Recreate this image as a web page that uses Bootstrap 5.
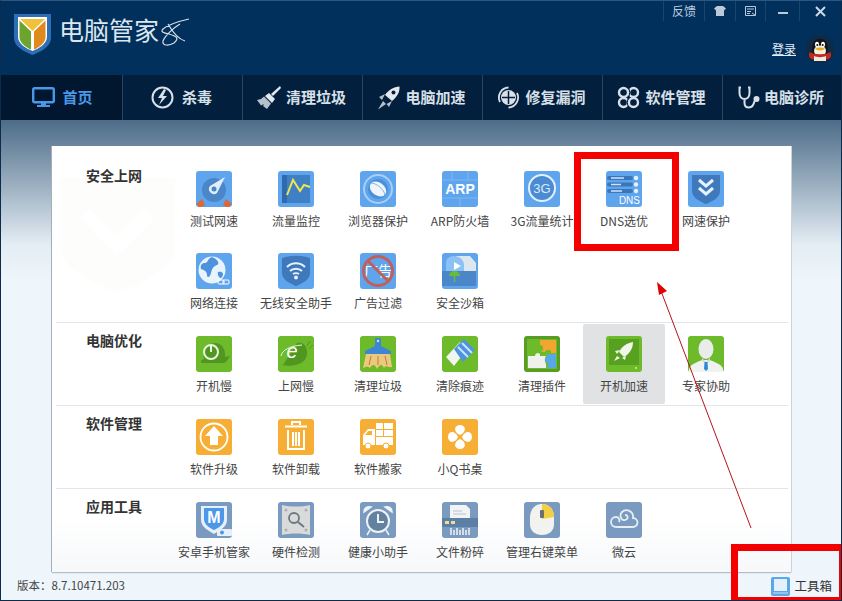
<!DOCTYPE html>
<html lang="zh-CN">
<head>
<meta charset="UTF-8">
<title>电脑管家</title>
<link rel="stylesheet" href="https://cdn.jsdelivr.net/npm/bootstrap@5.3.0/dist/css/bootstrap.min.css">
<style>
    body { margin: 0; background: #fff; font-family: "Noto Sans CJK SC", "Liberation Sans", sans-serif; }
    .win { width: 842px; height: 601px; position: relative; overflow: hidden; border: 1px solid #0b2c4c; border-top-color: #2c5680; }
    .win-head { height: 74px; background: #01305c; }
    .win-ctrl { height: 20px; color: #b9cadb; font-size: 12px; line-height: 20px; }
    .win-ctrl > div { border-left: 1px solid #17466f; height: 20px; }
    .logo-mark { margin: 13px 0 0 13px; }
    .app-title { color: #dbe6ef; font-size: 25px; line-height: 32px; margin: 12px 0 0 7px; }
    .app-swoosh { margin-top: 17px; }
    .login-box { gap: 10px; margin: 14px 7px 0 0; }
    .login-link { color: #e6eef5; font-size: 12px; }
    .tabs { height: 45px; background: #021f3e; }
    .tab-item { width: 120px; height: 45px; border-right: 1px solid #2a4560; color: #d8e0e8; font-size: 15px; font-weight: 700; gap: 5px; padding-right: 2px; }
    .tab-item:last-child { border-right: 0; flex: 1; gap: 3px; }
    .tab-home { width: 122px; background: #011730; color: #4a98e6; gap: 7px; padding-right: 0; padding-left: 2px; }
    .tab-wide { gap: 8px; }
    .main-area { height: 452px; padding: 26px 0 0 51px; background: linear-gradient(#4d6c88 0, #e4edf4 125px, #eef5fb 160px); }
    .tool-card { width: 739px; height: 426px; border: 0; border-radius: 0; position: relative; background: linear-gradient(#fff 370px, #f6f8fa 426px); box-shadow: -1px 0 0 #a4afb9, 0 1px 1px #b4bcc4, 1px 0 0 #d2d8de; }
    .tool-row { margin: 0 3px 0 4px; padding: 1px 0; border-bottom: 1px solid #e2e5e9; position: relative; }
    .tool-row:first-of-type { padding-top: 13px; }
    .tool-row:last-of-type { border-bottom: 0; }
    .row-title { width: 117px; padding: 7px 0 0 30px; font-size: 14px; line-height: 18px; font-weight: 700; color: #333; flex: none; }
    .tool-grid { display: grid; grid-template-columns: repeat(7, 82px); row-gap: 2px; }
    .tool-cell { height: 80px; padding-top: 12px; text-align: center; font-size: 12px; line-height: 18px; color: #444; border-radius: 2px; white-space: nowrap; }
    .tool-cell svg { display: block; margin: 0 auto 5px; }
    .tool-on { background: #e0e2e4; }
    .watermark { position: absolute; left: 8px; top: 32px; }
    .win-foot { height: 28px; background: #eef5fb; font-size: 11.5px; color: #444; padding: 0 9px 0 16px; }
    .foot-box { font-size: 12.5px; color: #333; gap: 4px; }
    .red-box { position: absolute; border: 7px solid #f40000; }
    .red-dns { left: 573px; top: 151px; width: 105px; height: 99px; }
    .red-tool { left: 730px; top: 543px; width: 115px; height: 60px; }
    .red-arrow { position: absolute; left: 640px; top: 270px; }
</style>
</head>
<body>
<div class="win d-flex flex-column">

    <!-- title bar -->
    <div class="win-head d-flex justify-content-between">
        <div class="d-flex align-items-start">
            <svg class="logo-mark" width="38" height="42" viewBox="0 0 38 42">
                <path d="M0 0H37V24C37 33 26 38 18.5 41C11 38 0 33 0 24Z" fill="#2d6fb6"/>
                <path d="M4 3H33V23C33 30 24 35 18.5 37C13 35 4 30 4 23Z" fill="#fff"/>
                <path d="M6 5H31L18.5 17Z" fill="#f0c23c"/>
                <path d="M5.500 6.500L17 17.500V35.500C12 33.500 5.500 29 5.500 23Z" fill="#6ba52e"/>
                <path d="M31.500 6.500L20 17.500V35.500C25 33.500 31.500 29 31.500 23Z" fill="#e08a1e"/>
            </svg>
            <div class="app-title">电脑管家</div>
            <svg class="app-swoosh" width="32" height="30" viewBox="0 0 32 30">
                <path d="M30 1C21 3 9 7 4 11C1 14 5 15 10 16C17 18 21 20 15 25C10 28 3 28 4 23C6 18 14 10 21 6M9 6C13 13 19 21 26 23" fill="none" stroke="#d7e1ea" stroke-width="1.200"/>
            </svg>
        </div>
        <div class="d-flex flex-column align-items-end">
            <div class="win-ctrl d-flex">
                <div class="text-center" style="width:41px">反馈</div>
                <div class="d-flex justify-content-center align-items-center" style="width:31px">
                    <svg width="12" height="10" viewBox="0 0 12 10"><path d="M3 0H9L12 2.500L10 4.500V10H2V4.500L0 2.500Z" fill="#b9cadb"/></svg>
                </div>
                <div class="d-flex justify-content-center align-items-center" style="width:30px">
                    <svg width="11" height="10" viewBox="0 0 11 10"><path d="M.5.5H10.500V9.500H.5ZM2 3H9M2 5.500H6M2 7.500H5M7 7L10 9" fill="none" stroke="#b9cadb"/></svg>
                </div>
                <div class="d-flex justify-content-center align-items-center" style="width:34px">
                    <svg width="10" height="8" viewBox="0 0 10 8"><rect y="5" width="10" height="2" fill="#b9cadb"/></svg>
                </div>
                <div class="d-flex justify-content-center align-items-center" style="width:42px">
                    <svg width="11" height="11" viewBox="0 0 11 11"><path d="M1 1L10 10M10 1L1 10" stroke="#ccd8e3" stroke-width="2"/></svg>
                </div>
            </div>
            <div class="login-box d-flex align-items-center">
                <a class="login-link" href="#">登录</a>
                <svg width="28" height="28" viewBox="0 0 28 28">
                    <circle cx="14" cy="14" r="14" fill="#0f2a45"/>
                    <ellipse cx="14" cy="13" rx="8" ry="9.500" fill="#14141a"/>
                    <ellipse cx="14" cy="16" rx="6" ry="5.500" fill="#f3f0e6"/>
                    <ellipse cx="11" cy="9.500" rx="2" ry="2.800" fill="#fff"/>
                    <ellipse cx="17" cy="9.500" rx="2" ry="2.800" fill="#fff"/>
                    <circle cx="11.300" cy="10" r="1" fill="#111"/>
                    <circle cx="16.700" cy="10" r="1" fill="#111"/>
                    <path d="M9 13.500C11 12 17 12 19 13.500C17 16 11 16 9 13.500Z" fill="#e9ad22"/>
                    <path d="M3.500 17C7 20 21 20 24.500 17C25.500 20 25 22 24 23C20 26 8 26 4 23C3 22 2.500 20 3.500 17Z" fill="#c9281e"/>
                    <path d="M8 21C11 22.500 17 22.500 20 21V26H8Z" fill="#efe9df"/>
                </svg>
            </div>
        </div>
    </div>

    <!-- main tabs -->
    <div class="tabs d-flex">
        <div class="tab-item tab-home d-flex align-items-center justify-content-center">
            <svg width="23" height="21" viewBox="0 0 23 21"><rect x="1.200" y="1.200" width="20.600" height="14" rx="1.500" fill="none" stroke="#4a98e6" stroke-width="2.400"/><path d="M9 16H14V18H18V20H5V18H9Z" fill="#4a98e6"/></svg>
            <span>首页</span>
        </div>
        <div class="tab-item tab-wide d-flex align-items-center justify-content-center">
            <svg width="23" height="23" viewBox="0 0 23 23"><circle cx="11.500" cy="11.500" r="10" fill="none" stroke="#d8e0e8" stroke-width="2"/><path d="M13 3L7 12H11L8 19L16 10H12L15 4Z" fill="#d8e0e8"/></svg>
            <span>杀毒</span>
        </div>
        <div class="tab-item d-flex align-items-center justify-content-center">
            <svg width="24" height="24" viewBox="0 0 24 24"><path d="M23 0L24 2L16 10L14 8Z" fill="#e4e9ee"/><path d="M12 7L18 13L15 17L8 10Z" fill="#e4e9ee"/><path d="M7 10.500L14 17.500L10 23L6 20L7 18L4 19.500L0 14L4 13Z" fill="#b6c0ca"/></svg>
            <span>清理垃圾</span>
        </div>
        <div class="tab-item d-flex align-items-center justify-content-center">
            <svg width="23" height="24" viewBox="0 0 23 24"><path d="M22.500 .5C23 6 20 11 15 15L8 9C11 4 17 1 22.500 .5Z" fill="#e4e9ee"/><path d="M8 8L2 11L5 14ZM15 15L12 21L9.500 18Z" fill="#b6c0ca"/><path d="M6 15L9 18L1 23.500Z" fill="#b6c0ca"/><circle cx="16.500" cy="6.500" r="2" fill="#021f3e"/></svg>
            <span>电脑加速</span>
        </div>
        <div class="tab-item d-flex align-items-center justify-content-center">
            <svg width="23" height="23" viewBox="0 0 23 23"><circle cx="11.500" cy="11.500" r="7.500" fill="#d8e0e8"/><path d="M11.500 5V18M5 11.500H18" stroke="#021f3e" stroke-width="1.500"/><path d="M3 16A10 10 0 0 1 11.500 1.500M20 7A10 10 0 0 1 11.500 21.500" fill="none" stroke="#d8e0e8" stroke-width="1.800"/></svg>
            <span>修复漏洞</span>
        </div>
        <div class="tab-item d-flex align-items-center justify-content-center">
            <svg width="23" height="23" viewBox="0 0 23 23"><circle cx="6.500" cy="6.500" r="4.500" fill="none" stroke="#d8e0e8" stroke-width="2.400"/><circle cx="16.500" cy="6.500" r="4.500" fill="none" stroke="#d8e0e8" stroke-width="2.400"/><circle cx="6.500" cy="16.500" r="4.500" fill="none" stroke="#d8e0e8" stroke-width="2.400"/><circle cx="16.500" cy="16.500" r="4.500" fill="none" stroke="#d8e0e8" stroke-width="2.400"/><path d="M11.500 1.500C13 5 13 8 11.500 11.500C10 15 10 18 11.500 21.500" fill="none" stroke="#021f3e" stroke-width="1"/></svg>
            <span>软件管理</span>
        </div>
        <div class="tab-item d-flex align-items-center justify-content-center">
            <svg width="23" height="23" viewBox="0 0 23 23"><path d="M3 1.500H1.500V7C1.500 11 4 13 6.500 13S11.500 11 11.500 7V1.500H10M6.500 13V17C6.500 20 8 21.500 11 21.500S15.500 20 16.500 15" fill="none" stroke="#d8e0e8" stroke-width="2"/><circle cx="18.500" cy="13" r="3" fill="#d8e0e8"/></svg>
            <span>电脑诊所</span>
        </div>
    </div>

    <!-- tools -->
    <div class="main-area">
        <div class="card tool-card">
            <svg class="watermark" width="115" height="115" viewBox="0 0 115 115"><path d="M0 0H115V68C115 90 80 105 57 115C34 105 0 90 0 68Z" fill="#fdfdfc"/><path d="M25 35L57 68L90 35" fill="none" stroke="#fff" stroke-width="14"/></svg>

            <div class="tool-row d-flex">
                <div class="row-title">安全上网</div>
                <div class="tool-grid">
                    <div class="tool-cell">
                        <svg width="36" height="36" viewBox="0 0 36 36"><rect width="36" height="36" rx="3" fill="#5ea5ee"/><circle cx="18" cy="19" r="12" fill="#4b86c6"/><path d="M0 33L6 28L9 34L6 36H3ZM36 33L30 28L27 34L30 36H33Z" fill="#d9683a"/><path d="M29 6L21 22A5 5 0 0 1 14 15Z" fill="#dfeefc"/><circle cx="18" cy="18" r="2.500" fill="#4b86c6"/></svg>
                        测试网速
                    </div>
                    <div class="tool-cell">
                        <svg width="36" height="36" viewBox="0 0 36 36"><rect width="36" height="36" rx="3" fill="#5ea5ee"/><rect x="4" y="4" width="28" height="28" fill="#3f7fc4"/><rect x="4" y="4" width="5" height="28" fill="#2f6aae"/><path d="M9 24L15 9L22 20L26 14L32 16" fill="none" stroke="#f3e64a" stroke-width="2"/></svg>
                        流量监控
                    </div>
                    <div class="tool-cell">
                        <svg width="36" height="36" viewBox="0 0 36 36"><rect width="36" height="36" rx="3" fill="#5ea5ee"/><circle cx="18" cy="18" r="14" fill="none" stroke="#a8cff5" stroke-width="2"/><circle cx="18" cy="18" r="10" fill="#4a8fd8"/><ellipse cx="18" cy="18" rx="9" ry="6.500" transform="rotate(35 18 18)" fill="#eef5fc"/><path d="M11 12C16 12 24 18 25 24" fill="none" stroke="#7db4ea"/></svg>
                        浏览器保护
                    </div>
                    <div class="tool-cell">
                        <svg width="36" height="36" viewBox="0 0 36 36"><rect width="36" height="36" rx="3" fill="#5ea5ee"/><path d="M0 9H36M0 27H36M10 0V9M26 0V9M18 27V36" stroke="#7db6f1"/><text x="18" y="23" text-anchor="middle" fill="#fff" font-family="Liberation Sans" font-size="14" font-weight="700">ARP</text></svg>
                        ARP防火墙
                    </div>
                    <div class="tool-cell">
                        <svg width="36" height="36" viewBox="0 0 36 36"><rect width="36" height="36" rx="3" fill="#5ea5ee"/><circle cx="18" cy="17" r="13" fill="#4a8bd4" stroke="#e3f0fc" stroke-width="2"/><text x="18" y="22" text-anchor="middle" fill="#dbeafa" font-family="Liberation Sans" font-size="13">3G</text></svg>
                        3G流量统计
                    </div>
                    <div class="tool-cell">
                        <svg width="36" height="36" viewBox="0 0 36 36"><rect width="36" height="36" rx="3" fill="#5ea5ee"/><path d="M3 7H25M3 13.500H25M3 20H25" stroke="#3b77b8" stroke-width="4" stroke-linecap="round"/><path d="M5 7H18M5 13.500H15M5 20H16" stroke="#cfe4fa" stroke-width="1.500"/><circle cx="30" cy="7" r="2.200" fill="#e6f1fc"/><circle cx="30" cy="13.500" r="2.200" fill="#e6f1fc"/><circle cx="30" cy="20" r="2.200" fill="#e6f1fc"/><text x="34" y="33" text-anchor="end" fill="#fff" font-family="Liberation Sans" font-size="10">DNS</text></svg>
                        DNS选优
                    </div>
                    <div class="tool-cell">
                        <svg width="36" height="36" viewBox="0 0 36 36"><rect width="36" height="36" rx="3" fill="#5ea5ee"/><path d="M4 4H32V20C32 27 23 31 18 33C13 31 4 27 4 20Z" fill="#3f78bb"/><path d="M11 9L18 15L25 9M11 17L18 23L25 17" fill="none" stroke="#e6f1fc" stroke-width="3"/></svg>
                        网速保护
                    </div>
                    <div class="tool-cell">
                        <svg width="36" height="36" viewBox="0 0 36 36"><rect width="36" height="36" rx="3" fill="#5ea5ee"/><circle cx="16" cy="17" r="13.500" fill="#e9f3fc"/><path d="M16 4C11 6 12 10 9 10S4 12 5 16C9 17 11 19 11 22S14 25 15 20S18 13 21 12S22 6 16 4ZM22 19C21 22 24 27 26 24S27 18 22 19Z" fill="#4d92dc"/><rect x="22" y="27" width="6" height="4" rx="1" fill="none" stroke="#fff"/><rect x="27" y="27" width="6" height="4" rx="1" fill="none" stroke="#fff"/></svg>
                        网络连接
                    </div>
                    <div class="tool-cell">
                        <svg width="36" height="36" viewBox="0 0 36 36"><rect width="36" height="36" rx="3" fill="#5ea5ee"/><path d="M4 5C13 2 23 2 32 5V20C32 27 23 31 18 33C13 31 4 27 4 20Z" fill="#3f78bb"/><path d="M9 14C14 9 22 9 27 14M12 18C15 15 21 15 24 18M15 21C16.500 20 19.500 20 21 21" fill="none" stroke="#e6f1fc" stroke-width="2"/><circle cx="18" cy="24.500" r="2" fill="#e6f1fc"/></svg>
                        无线安全助手
                    </div>
                    <div class="tool-cell">
                        <svg width="36" height="36" viewBox="0 0 36 36"><rect width="36" height="36" rx="3" fill="#5ea5ee"/><text x="18" y="23" text-anchor="middle" fill="#fff" font-size="14" font-family="Noto Sans CJK SC">广告</text><circle cx="18" cy="18" r="14.500" fill="none" stroke="#c0605a" stroke-width="3"/><path d="M8 8L28 28" stroke="#c0605a" stroke-width="3"/></svg>
                        广告过滤
                    </div>
                    <div class="tool-cell">
                        <svg width="36" height="36" viewBox="0 0 36 36"><rect width="36" height="36" rx="3" fill="#5ea5ee"/><path d="M14 3H28L34 10V22H14Z" fill="#dde7f0"/><path d="M4 10C4 5 8 3 12 3C16 3 22 6 22 12V22H4Z" fill="#8cc1f5"/><path d="M12 9L19 13L12 17Z" fill="#fff"/><rect x="0" y="18" width="34" height="15" fill="#4a86c8"/><path d="M7 23A5.500 5 0 0 1 18 23Z" fill="#6abb3a"/><path d="M12.500 23V29" stroke="#6abb3a" stroke-width="1.500"/></svg>
                        安全沙箱
                    </div>
                </div>
            </div>

            <div class="tool-row d-flex">
                <div class="row-title">电脑优化</div>
                <div class="tool-grid">
                    <div class="tool-cell">
                        <svg width="36" height="36" viewBox="0 0 36 36"><rect width="36" height="36" rx="3" fill="#6dbb2b"/><path d="M6 27C3 25 6 24 8 23C6 14 12 7 19 7S30 14 29 21L34 20L31 25C28 28 26 27 24 27H6Z" fill="#4f9720"/><circle cx="15" cy="16" r="7" fill="none" stroke="#e9f6dc" stroke-width="2"/><path d="M15 10V16" stroke="#e9f6dc" stroke-width="2"/></svg>
                        开机慢
                    </div>
                    <div class="tool-cell">
                        <svg width="36" height="36" viewBox="0 0 36 36"><rect width="36" height="36" rx="3" fill="#6dbb2b"/><path d="M5 29C10 31 27 30 29 19C30 12 26 5 19 7" fill="#4f9720"/><text x="14" y="22" text-anchor="middle" fill="#fff" font-family="Liberation Sans" font-size="20" font-style="italic">e</text><path d="M3 20C4 14 12 10 24 9" fill="none" stroke="#eaf6dd"/><path d="M29 10L32 5M31 13L35 9" stroke="#4f9720"/></svg>
                        上网慢
                    </div>
                    <div class="tool-cell">
                        <svg width="36" height="36" viewBox="0 0 36 36"><rect width="36" height="36" rx="3" fill="#6dbb2b"/><path d="M15 2H21V10L31 15V18H5V15L15 10Z" fill="#3d86d6"/><circle cx="18" cy="5" r="1.200" fill="#cfe4fa"/><path d="M6 18H30L32 31C28 32 26 28 24 32C22 28 20 28 17 33C15 28 12 28 10 32C8 30 6 31 3 32Z" fill="#edc77d"/><path d="M11 20L9 29M18 20V29M25 20L27 29" stroke="#b3813a"/></svg>
                        清理垃圾
                    </div>
                    <div class="tool-cell">
                        <svg width="36" height="36" viewBox="0 0 36 36"><rect width="36" height="36" rx="3" fill="#6dbb2b"/><path d="M4 21L18 6L25 13L12 30Z" fill="#f1f4ef"/><path d="M12 13L22 3L33 14L21 26Z" fill="#4d94e0"/><path d="M16 11L26 21M20 7L30 17" stroke="#cfe3f7" stroke-width="2"/></svg>
                        清除痕迹
                    </div>
                    <div class="tool-cell">
                        <svg width="36" height="36" viewBox="0 0 36 36"><rect width="36" height="36" rx="3" fill="#599c25"/><rect x="3" y="3" width="30" height="30" fill="#6dbb2b"/><path d="M16 4H32V17H27C28 13 22 13 21 16H17C20 14 20 9 16 9Z" fill="#f2a62e"/><path d="M4 20H11C11 16 17 16 16 20H22C20 23 21 26 22 28V32H4Z" fill="#eef1ec"/><path d="M22 18H32V32H23C25 30 25 26 21 26V22C24 23 24 19 22 18Z" fill="#58a8e8"/></svg>
                        清理插件
                    </div>
                    <div class="tool-cell tool-on">
                        <svg width="36" height="36" viewBox="0 0 36 36"><rect width="36" height="36" rx="3" fill="#6dbb2b"/><rect x="3" y="3" width="30" height="26" fill="#57a020"/><path d="M27 6C27 13 23 18 18 21L13 16C16 10 21 7 27 6Z" fill="#f1f6ec"/><path d="M14 14L9 15L11 18ZM20 20L19 24L16 22ZM11 20L14 22L8 25Z" fill="#f1f6ec"/><circle cx="30" cy="32" r="1" fill="#cbe8ab"/></svg>
                        开机加速
                    </div>
                    <div class="tool-cell">
                        <svg width="36" height="36" viewBox="0 0 36 36"><rect width="36" height="36" rx="3" fill="#6dbb2b"/><path d="M1 36V33C2 28 10 26 14 24H22C26 26 34 28 35 33V36Z" fill="#f0f2f2"/><ellipse cx="18" cy="13" rx="7.500" ry="10" fill="#e9ecec"/><path d="M14 22L18 26L22 22V25L18 28L14 25Z" fill="#d5d9da"/><path d="M16.500 26H19.500L20 33L18 35L16 33Z" fill="#2d8bd6"/></svg>
                        专家协助
                    </div>
                </div>
            </div>

            <div class="tool-row d-flex">
                <div class="row-title">软件管理</div>
                <div class="tool-grid">
                    <div class="tool-cell">
                        <svg width="36" height="36" viewBox="0 0 36 36"><rect width="36" height="36" rx="3" fill="#f6ae35"/><circle cx="18" cy="18" r="13.500" fill="none" stroke="#fff" stroke-width="1.800"/><path d="M18 7L27 17H22V26H14V17H9Z" fill="#fff"/></svg>
                        软件升级
                    </div>
                    <div class="tool-cell">
                        <svg width="36" height="36" viewBox="0 0 36 36"><rect width="36" height="36" rx="3" fill="#f6ae35"/><path d="M14 6V3H22V6M7 7.500H29M10 11V30H26V11M15 13V27M18 13V27M21 13V27" fill="none" stroke="#fff" stroke-width="2"/></svg>
                        软件卸载
                    </div>
                    <div class="tool-cell">
                        <svg width="36" height="36" viewBox="0 0 36 36"><rect width="36" height="36" rx="3" fill="#f6ae35"/><path d="M16 4H23V10H16ZM24 4H33V10H24ZM16 11H23V17H16ZM24 11H33V17H24ZM16 18H33V26H16ZM3 16L8 10H15V26H3Z" fill="#fff"/><path d="M5 16L8.500 12H12V16Z" fill="#f6ae35"/><circle cx="8" cy="27" r="3" fill="#fff" stroke="#f6ae35"/><circle cx="26" cy="27" r="3" fill="#fff" stroke="#f6ae35"/></svg>
                        软件搬家
                    </div>
                    <div class="tool-cell">
                        <svg width="36" height="36" viewBox="0 0 36 36"><rect width="36" height="36" rx="3" fill="#f6ae35"/><path d="M18 16C11 13 12 6 18 6S25 13 18 16ZM18 20C11 23 12 30 18 30S25 23 18 20ZM16 18C13 11 6 12 6 18S13 25 16 18ZM20 18C23 11 30 12 30 18S23 25 20 18Z" fill="#fff"/></svg>
                        小Q书桌
                    </div>
                </div>
            </div>

            <div class="tool-row d-flex">
                <div class="row-title">应用工具</div>
                <div class="tool-grid">
                    <div class="tool-cell">
                        <svg width="36" height="36" viewBox="0 0 36 36"><rect width="36" height="36" rx="3" fill="#7a9abf"/><path d="M5 4H31V18C31 25 23 29 18 32C13 29 5 25 5 18Z" fill="#e5f0fb"/><path d="M8 6H28V17C28 23 22 26 18 28C14 26 8 23 8 17Z" fill="#4d97e8"/><text x="18" y="21" text-anchor="middle" fill="#fff" font-family="Liberation Sans" font-size="16" font-weight="700">M</text><rect x="21" y="27" width="15" height="7" rx="1" fill="#e5f0fb"/><circle cx="26" cy="30.500" r="2" fill="#4d97e8"/></svg>
                        安卓手机管家
                    </div>
                    <div class="tool-cell">
                        <svg width="36" height="36" viewBox="0 0 36 36"><rect width="36" height="36" rx="3" fill="#7a9abf"/><path d="M4 3C13 5 23 5 32 3V33C23 31 13 31 4 33Z" fill="#d9dbdb"/><circle cx="8" cy="8" r="1.500" fill="#a8b0b6"/><circle cx="28" cy="8" r="1.500" fill="#a8b0b6"/><circle cx="8" cy="28" r="1.500" fill="#a8b0b6"/><circle cx="28" cy="28" r="1.500" fill="#a8b0b6"/><circle cx="16" cy="16" r="5" fill="none" stroke="#6e7880" stroke-width="1.800"/><path d="M20 20L26 25" stroke="#6e7880" stroke-width="2"/></svg>
                        硬件检测
                    </div>
                    <div class="tool-cell">
                        <svg width="36" height="36" viewBox="0 0 36 36"><rect width="36" height="36" rx="3" fill="#7a9abf"/><circle cx="18" cy="19" r="11" fill="#62829f" stroke="#eef3f8" stroke-width="2"/><path d="M18 12V20H24" fill="none" stroke="#eef3f8" stroke-width="2"/><path d="M4 10C4 6 7 4 11 5ZM32 10C32 6 29 4 25 5ZM10 28L7 33M26 28L29 33" fill="#eef3f8" stroke="#eef3f8" stroke-width="1.500"/></svg>
                        健康小助手
                    </div>
                    <div class="tool-cell">
                        <svg width="36" height="36" viewBox="0 0 36 36"><rect width="36" height="36" rx="3" fill="#7a9abf"/><path d="M8 3H24L28 7V16H8Z" fill="#f1f3f4"/><path d="M11 9H20M11 12H24" stroke="#b9c4ce"/><rect y="16" width="36" height="9" fill="#5c7fa5"/><rect x="3" y="19" width="4" height="3" fill="#f2dd8c"/><rect x="9" y="19" width="4" height="3" fill="#f2dd8c"/><path d="M9 26V33M12 28V33M15 26V33M18 28V33M21 26V33M24 28V33M27 26V33" stroke="#f1f3f4" stroke-width="1.500"/></svg>
                        文件粉碎
                    </div>
                    <div class="tool-cell">
                        <svg width="36" height="36" viewBox="0 0 36 36"><rect width="36" height="36" rx="3" fill="#7a9abf"/><path d="M6 16C6 7 11 2 18 2S30 7 30 16V22C30 29 25 33 18 33S6 29 6 22Z" fill="#f2f3ee"/><path d="M18 2C25 2 30 7 30 15L18 17Z" fill="#f4cf45"/><rect x="16" y="8" width="4" height="8" rx="1" fill="#6a6f72"/></svg>
                        管理右键菜单
                    </div>
                    <div class="tool-cell">
                        <svg width="36" height="36" viewBox="0 0 36 36"><rect width="36" height="36" rx="3" fill="#7a9abf"/><path d="M10 25H27A4.500 4.500 0 0 0 27 16C28 9 20 6 16 10C13 13 15 19 19 18S22 13 19 13M10 25A5 5 0 0 1 10 15C13 15 14 18 13 20" fill="none" stroke="#e6edf5" stroke-width="1.800"/></svg>
                        微云
                    </div>
                </div>
            </div>
        </div>
    </div>

    <!-- status bar -->
    <div class="win-foot d-flex justify-content-between align-items-center">
        <span>版本：8.7.10471.203</span>
        <div class="foot-box d-flex align-items-center">
            <svg width="19" height="19" viewBox="0 0 19 19"><rect width="19" height="19" rx="2" fill="#5aa7ea"/><path d="M3 2H16V14H3Z" fill="#e4f1fc"/><rect x="2" y="15" width="15" height="2" fill="#8cc4f2"/></svg>
            <span>工具箱</span>
        </div>
    </div>

    <!-- annotations drawn over the screenshot -->
    <div class="red-box red-dns"></div>
    <div class="red-box red-tool"></div>
    <svg class="red-arrow" width="120" height="265" viewBox="0 0 120 265">
        <path d="M110 257L20 20" stroke="#b4141c" stroke-width="1" fill="none"/>
        <path d="M16 11L26 20L18 24Z" fill="#e00000"/>
    </svg>
</div>
<script src="https://cdn.jsdelivr.net/npm/bootstrap@5.3.0/dist/js/bootstrap.bundle.min.js"></script>
</body>
</html>
